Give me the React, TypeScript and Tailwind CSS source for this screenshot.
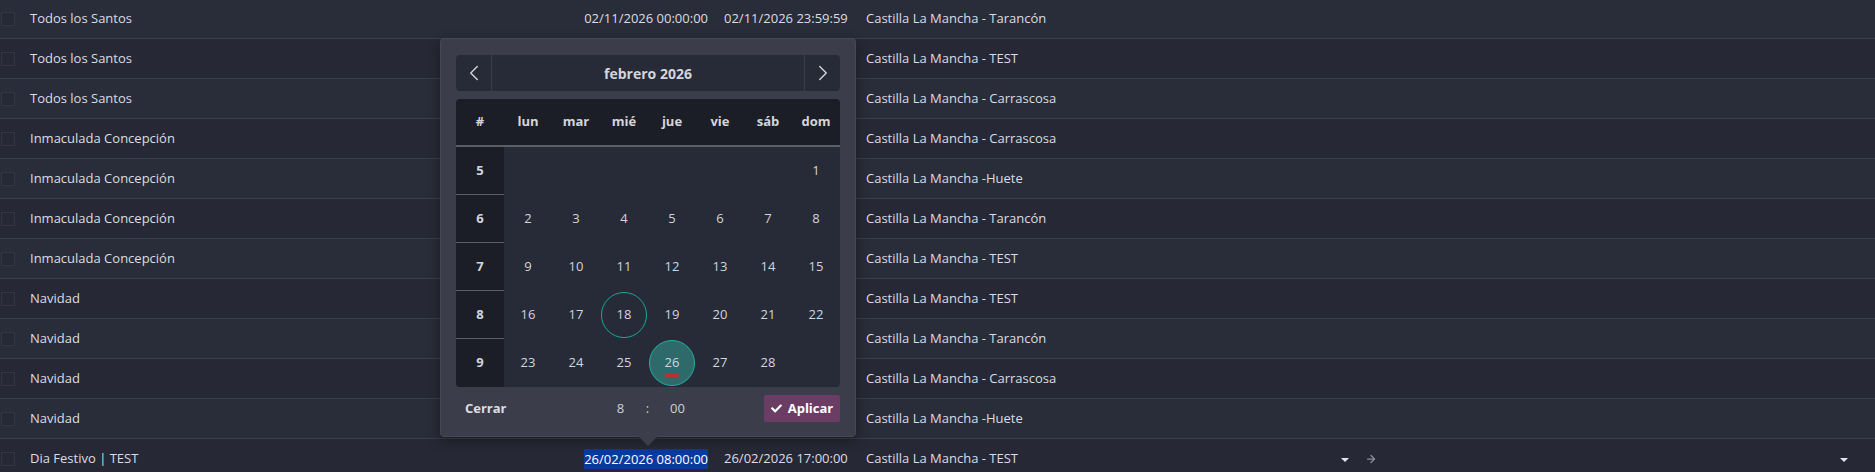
import React from 'react';
import { ChevronLeft, ChevronRight, ArrowRight } from 'lucide-react';
import { FaCheck } from 'react-icons/fa';

type Row = {
  name: string;
  start: string;
  end: string;
  place: string;
};

// dates of the rows behind the open picker are covered, so they are left out
const rows: Row[] = [
  { name: 'Todos los Santos', start: '02/11/2026 00:00:00', end: '02/11/2026 23:59:59', place: 'Castilla La Mancha - Tarancón' },
  { name: 'Todos los Santos', start: '', end: '', place: 'Castilla La Mancha - TEST' },
  { name: 'Todos los Santos', start: '', end: '', place: 'Castilla La Mancha - Carrascosa' },
  { name: 'Inmaculada Concepción', start: '', end: '', place: 'Castilla La Mancha - Carrascosa' },
  { name: 'Inmaculada Concepción', start: '', end: '', place: 'Castilla La Mancha -Huete' },
  { name: 'Inmaculada Concepción', start: '', end: '', place: 'Castilla La Mancha - Tarancón' },
  { name: 'Inmaculada Concepción', start: '', end: '', place: 'Castilla La Mancha - TEST' },
  { name: 'Navidad', start: '', end: '', place: 'Castilla La Mancha - TEST' },
  { name: 'Navidad', start: '', end: '', place: 'Castilla La Mancha - Tarancón' },
  { name: 'Navidad', start: '', end: '', place: 'Castilla La Mancha - Carrascosa' },
  { name: 'Navidad', start: '', end: '', place: 'Castilla La Mancha -Huete' },
];

const weekdays = ['lun', 'mar', 'mié', 'jue', 'vie', 'sáb', 'dom'];

const weeks: { num: number; days: (number | null)[] }[] = [
  { num: 5, days: [null, null, null, null, null, null, 1] },
  { num: 6, days: [2, 3, 4, 5, 6, 7, 8] },
  { num: 7, days: [9, 10, 11, 12, 13, 14, 15] },
  { num: 8, days: [16, 17, 18, 19, 20, 21, 22] },
  { num: 9, days: [23, 24, 25, 26, 27, 28, null] },
];

const Caret = () => (
  <span className="inline-block w-0 h-0 border-l-[4px] border-r-[4px] border-t-[4px] border-l-transparent border-r-transparent border-t-[#e4e5ea]" />
);

const Checkbox = () => (
  <div className="w-[30px] flex items-center">
    <span className="ml-[1px] w-[14px] h-[14px] border border-[#333643] bg-[#262935]" />
  </div>
);

const DataRow = ({ row, index }: { row: Row; index: number }) => (
  <div
    className={`flex items-center h-[40px] border-b border-[#3a3d4a] ${
      index % 2 === 0 ? 'bg-[#292c39]' : 'bg-[#262935]'
    }`}
  >
    <Checkbox />
    <div className="w-[540px]">{row.name}</div>
    <div className="w-[138px] text-right">{row.start}</div>
    <div className="w-[158px] pl-[16px]">{row.end}</div>
    <div>{row.place}</div>
  </div>
);

const DayCell = ({ day }: { day: number | null }) => {
  if (day === 18) {
    return (
      <div className="h-[48px] flex items-center justify-center">
        <span className="w-[46px] h-[46px] rounded-full border border-[#19a898] flex items-center justify-center">
          18
        </span>
      </div>
    );
  }
  if (day === 26) {
    return (
      <div className="h-[48px] flex items-center justify-center">
        <span className="relative w-[46px] h-[46px] rounded-full border border-[#1db3a1] bg-[#2f6a6b] flex items-center justify-center">
          26
          <span className="absolute left-1/2 -translate-x-1/2 bottom-[8px] w-[13px] h-[3px] bg-[#c0312e]" />
        </span>
      </div>
    );
  }
  return <div className="h-[48px] flex items-center justify-center">{day ?? ''}</div>;
};

const DatePicker = () => (
  <div className="absolute left-[440px] top-[38px] w-[416px] h-[399px] bg-[#3c3d4b] border border-[#464855] rounded-[4px] shadow-[0_4px_12px_rgba(0,0,0,0.35)] px-[15px] pt-[16px] z-10">
    {/* month navigation */}
    <div className="flex h-[36px] rounded-[4px] bg-[#272a37] text-[#d4d5da]">
      <button className="w-[36px] flex items-center justify-center border-r border-[#3b3d49]">
        <ChevronLeft size={26} strokeWidth={1.3} />
      </button>
      <div className="flex-1 flex items-center justify-center font-bold text-[14px]">febrero 2026</div>
      <button className="w-[36px] flex items-center justify-center border-l border-[#3b3d49]">
        <ChevronRight size={26} strokeWidth={1.3} />
      </button>
    </div>

    {/* calendar grid */}
    <div className="mt-[8px] rounded-[4px] overflow-hidden text-[#d4d5da]">
      <div className="grid grid-cols-8 h-[48px] bg-[#1c1e27] border-b-2 border-[#5b5d68] font-bold">
        <div className="flex items-center justify-center">#</div>
        {weekdays.map((d) => (
          <div key={d} className="flex items-center justify-center">
            {d}
          </div>
        ))}
      </div>
      {weeks.map((w, i) => (
        <div key={w.num} className="grid grid-cols-8 bg-[#272a37]">
          <div
            className={`h-[48px] flex items-center justify-center bg-[#1c1e27] font-bold ${
              i < weeks.length - 1 ? 'border-b border-[#5b5d68]' : ''
            }`}
          >
            {w.num}
          </div>
          {w.days.map((d, j) => (
            <DayCell key={j} day={d} />
          ))}
        </div>
      ))}
    </div>

    {/* footer */}
    <div className="mt-[8px] flex items-center h-[27px]">
      <button className="ml-[9px] font-bold text-[#dcdde2]">Cerrar</button>
      <div className="ml-[104px] flex items-center text-[#cfd0d6]">
        <span className="w-[20px] text-center">8</span>
        <span className="ml-[14px] w-[6px] text-center">:</span>
        <span className="ml-[17px] w-[20px] text-center">00</span>
      </div>
      <button className="ml-auto w-[76px] h-[27px] rounded-[2px] bg-[#6b3d64] text-white font-bold flex items-center justify-center gap-[6px]">
        <FaCheck size={11} />
        Aplicar
      </button>
    </div>

    <span className="absolute left-1/2 -translate-x-1/2 top-full w-0 h-0 border-l-[10px] border-r-[10px] border-t-[10px] border-l-transparent border-r-transparent border-t-[#3c3d4b]" />
  </div>
);

export default function App() {
  return (
    <div className="relative w-[1875px] h-[472px] overflow-hidden bg-[#272a36] text-[13px] text-[#dcdde2] font-['Open_Sans',sans-serif]">
      <div className="-mt-[1px]">
        {rows.map((r, i) => (
          <DataRow key={i} row={r} index={i} />
        ))}

        {/* row being edited */}
        <div className="flex items-center h-[40px] bg-[#262935]">
          <Checkbox />
          <div className="w-[540px]">Dia Festivo | TEST</div>
          <div className="w-[138px] text-right">
            <span className="bg-[#0b3a9e] text-white leading-[20px] inline-block">26/02/2026 08:00:00</span>
          </div>
          <div className="w-[158px] pl-[16px]">26/02/2026 17:00:00</div>
          <div className="w-[475px]">Castilla La Mancha - TEST</div>
          <div className="w-[24px] flex items-center pt-[2px]">
            <Caret />
          </div>
          <span className="w-[14px] flex items-center text-[#8b909d]">
            <ArrowRight size={12} strokeWidth={2.5} />
          </span>
          <div className="ml-[461px] flex items-center pt-[2px]">
            <Caret />
          </div>
        </div>
      </div>

      <DatePicker />
    </div>
  );
}
